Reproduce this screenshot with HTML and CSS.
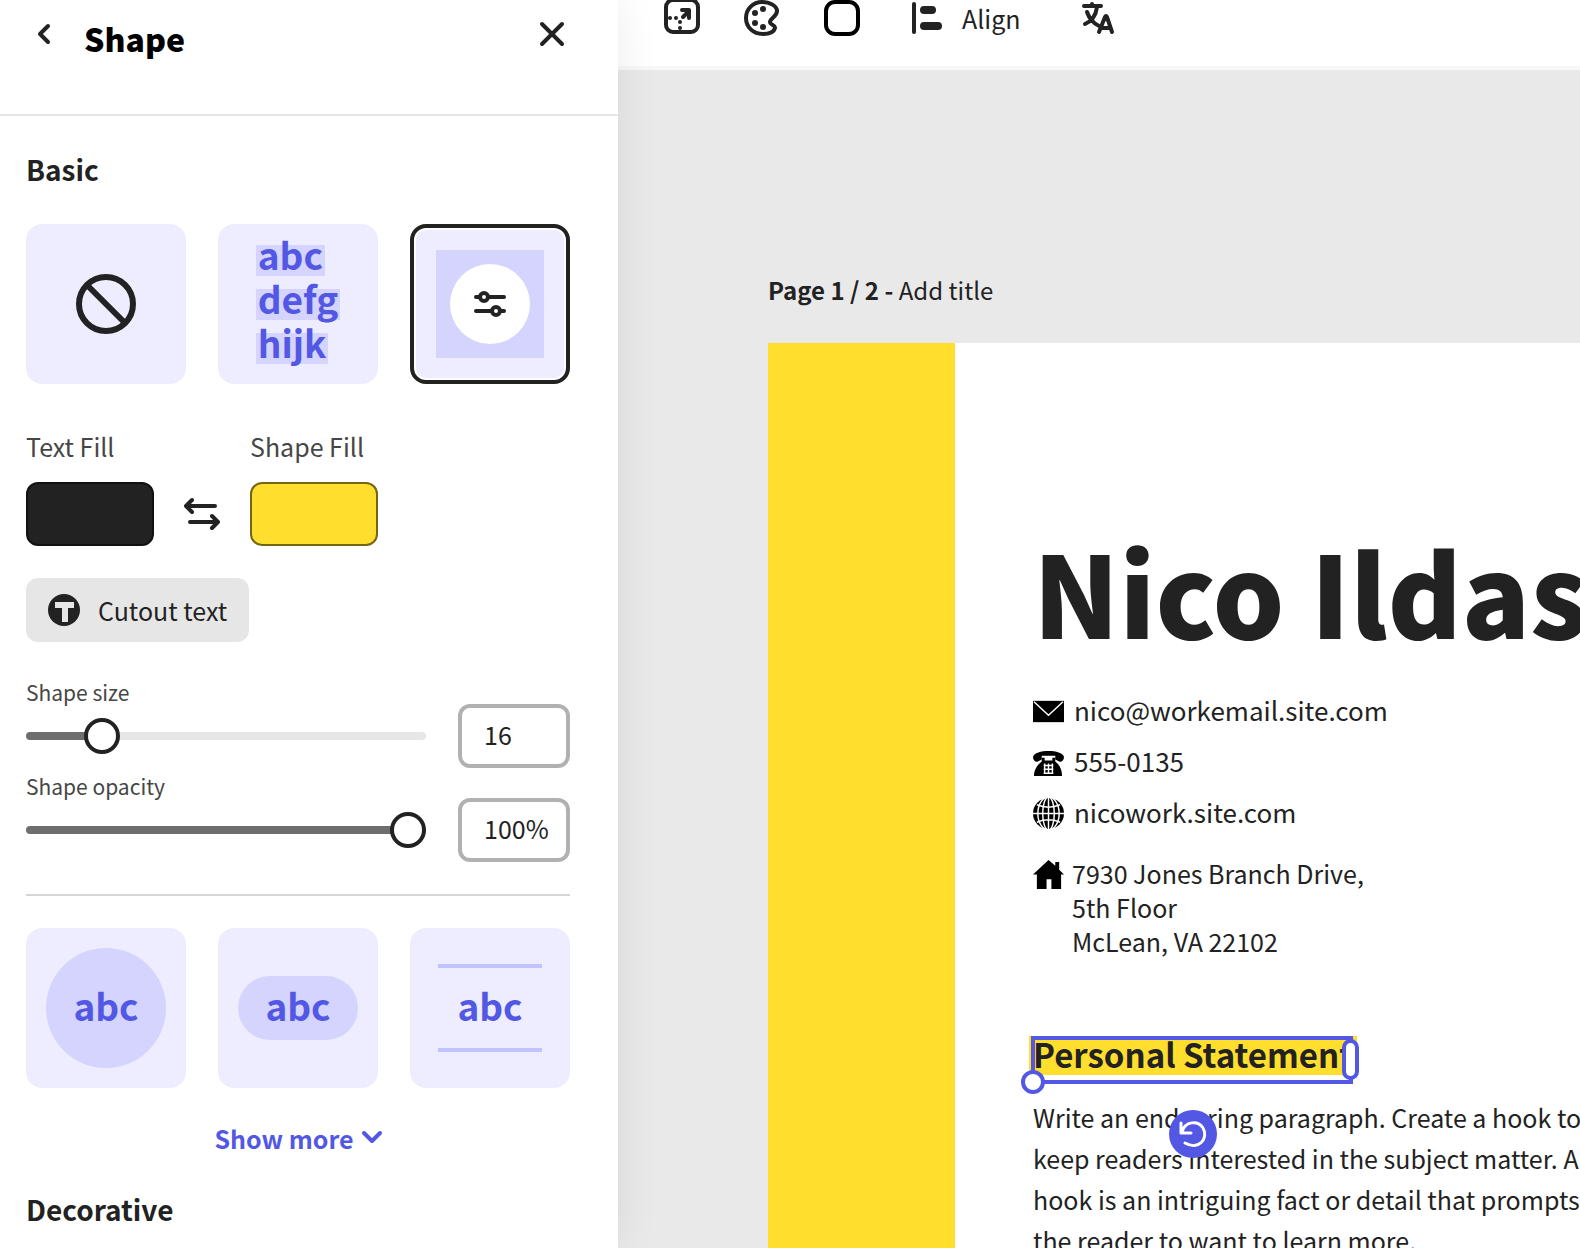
FILE: index.html
```html
<!DOCTYPE html>
<html lang="en">
<head>
  <meta charset="UTF-8">
  <meta name="viewport" content="width=device-width, initial-scale=1.0">
  <title>Shape</title>
  <link rel="stylesheet" href="styles.css">
</head>
<body>
  <!-- shape panel -->
  <aside class="panel">
    <header class="panel-header">
      <button class="icon-button" aria-label="Back">
        <svg viewBox="0 0 36 36"><path class="line" d="M22 10l-8 8 8 8"/></svg>
      </button>
      <h1 class="panel-title">Shape</h1>
      <button class="icon-button" aria-label="Close">
        <svg viewBox="0 0 36 36"><path class="line" d="M8 8l20 20M28 8L8 28"/></svg>
      </button>
    </header>

    <div class="panel-body">
      <h2 class="section-title">Basic</h2>
      <div class="tiles">
        <button class="tile" aria-label="None">
          <svg class="none-icon" viewBox="0 0 60 60">
            <circle cx="30" cy="30" r="27"/>
            <path d="M11 11l38 38"/>
          </svg>
        </button>
        <button class="tile">
          <span class="text-lines">
            <span>abc</span>
            <span>defg</span>
            <span>hijk</span>
          </span>
        </button>
        <button class="tile selected" aria-label="Rectangle">
          <span class="square">
            <span class="round">
              <svg viewBox="0 0 32 26">
                <path class="line" d="M2 6h4M14 6h16M2 20h16M26 20h4"/>
                <circle class="line" cx="10" cy="6" r="4"/>
                <circle class="line" cx="22" cy="20" r="4"/>
              </svg>
            </span>
          </span>
        </button>
      </div>

      <div class="fills">
        <label class="fill-label" for="text-fill">Text Fill</label>
        <label class="fill-label shape-label" for="shape-fill">Shape Fill</label>
        <button class="swatch dark" id="text-fill"></button>
        <button class="swap" aria-label="Swap colors">
          <svg viewBox="0 0 40 36">
            <path class="line" d="M33 10H4M10 4l-6 6 6 6M8 26h28M30 20l6 6-6 6"/>
          </svg>
        </button>
        <button class="swatch yellow" id="shape-fill"></button>
      </div>

      <button class="cutout">
        <svg viewBox="0 0 32 32">
          <circle cx="16" cy="16" r="16"/>
          <path d="M7 8h19v6h-6v14h-6V14H7z"/>
        </svg>
        Cutout text
      </button>

      <div class="sliders">
        <div class="slider-row">
          <div class="slider">
            <label for="size">Shape size</label>
            <input type="range" id="size" min="0" max="100" value="16" style="--value: 16%">
          </div>
          <input class="number" type="text" value="16" aria-label="Shape size value">
        </div>
        <div class="slider-row">
          <div class="slider">
            <label for="opacity">Shape opacity</label>
            <input type="range" id="opacity" min="0" max="100" value="100" style="--value: 100%">
          </div>
          <input class="number" type="text" value="100%" aria-label="Shape opacity value">
        </div>
      </div>

      <hr class="divider">

      <div class="tiles">
        <button class="tile"><span class="abc circle">abc</span></button>
        <button class="tile"><span class="abc pill">abc</span></button>
        <button class="tile"><span class="abc lines">abc</span></button>
      </div>

      <button class="show-more">
        Show more
        <svg viewBox="0 0 20 16"><path d="M2 3l8 8 8-8"/></svg>
      </button>

      <h2 class="section-title">Decorative</h2>
    </div>
  </aside>

  <main class="editor">
    <!-- toolbar -->
    <nav class="toolbar">
      <button class="tool" aria-label="Resize">
        <svg viewBox="0 0 36 36">
          <rect class="thick" x="2" y="0" width="32" height="32" rx="7"/>
          <path class="thick" d="M18 10h7v8M19 17l6-6"/>
          <circle class="solid" cx="6" cy="18" r="2"/>
          <circle class="solid" cx="12" cy="18" r="2"/>
          <circle class="solid" cx="16" cy="22" r="2"/>
          <circle class="solid" cx="16" cy="28" r="2"/>
        </svg>
      </button>
      <button class="tool" aria-label="Color">
        <svg viewBox="0 0 36 36">
          <path class="thick" d="M18 2C9 2 2 9 2 18s7 16 17 16c6 0 11-2 12-6 1-3-5-3-5-6 0-4 7-5 7-11 0-5-7-9-15-9z"/>
          <circle class="solid" cx="11" cy="13" r="3"/>
          <circle class="solid" cx="19" cy="9" r="3"/>
          <circle class="solid" cx="11" cy="23" r="3"/>
          <circle class="solid" cx="19" cy="27" r="3"/>
        </svg>
      </button>
      <button class="tool" aria-label="Shape">
        <svg viewBox="0 0 36 36"><rect class="thick black" x="2" y="2" width="32" height="32" rx="9"/></svg>
      </button>
      <button class="tool wide">
        <svg viewBox="0 0 36 36">
          <path class="thick" d="M2 4v28"/>
          <rect class="solid" x="8" y="6" width="16" height="8" rx="4"/>
          <rect class="solid" x="8" y="22" width="22" height="8" rx="4"/>
        </svg>
        Align
      </button>
      <button class="tool wide" aria-label="Translate">
        <svg viewBox="0 0 36 36">
          <path class="thick" d="M3 6h17M11 4v2M16 7c-1 8-5 14-12 17M6 12c2 6 7 12 12 14M18 32l6-15q1-2 2 0l5 15M21 28h8"/>
        </svg>
      </button>
    </nav>

    <!-- canvas with the resume page -->
    <div class="workspace">
      <p class="page-label"><strong>Page 1 / 2 - </strong>Add title</p>
      <article class="page">
        <div class="band"></div>
        <div class="resume">
          <h2 class="name">Nico Ildas</h2>
          <ul class="contact">
            <li>
              <svg viewBox="0 0 32 32">
                <path d="M0 5h32v22H0z"/>
                <path class="cut" d="M1 6l15 14L31 6"/>
              </svg>
              nico@workemail.site.com
            </li>
            <li>
              <svg viewBox="0 0 32 32">
                <path d="M0 10C2 2 30 2 32 10c0 4-3 6-5 5l-4-2V9H9v4l-4 2C3 16 0 14 0 10z"/>
                <path d="M9 11h3v3h8v-3h3v4c4 3 7 8 7 15H1c0-7 4-12 8-15z"/>
                <path class="cut" d="M11 19h10M11 23h10M11 27h10M12 17v10M16 17v10M20 17v10"/>
              </svg>
              555-0135
            </li>
            <li>
              <svg viewBox="0 0 32 32">
                <circle cx="16" cy="16" r="16"/>
                <path class="cut" d="M0 16h32M16 0v32M4 7q12 5 24 0M4 25q12-5 24 0"/>
                <ellipse class="cut" cx="16" cy="16" rx="6" ry="17"/>
                <ellipse class="cut" cx="16" cy="16" rx="11" ry="17"/>
              </svg>
              nicowork.site.com
            </li>
            <li class="address">
              <svg viewBox="0 0 32 32">
                <path d="M16 1l7 6V3h4v8l5 5h-3v15H19V21h-5v10H4V16H0z"/>
              </svg>
              <span>7930 Jones Branch Drive,<br>5th Floor<br>McLean, VA 22102</span>
            </li>
          </ul>

          <div class="selection">
            <h3 class="statement">Personal Statement</h3>
            <div class="frame"></div>
            <span class="corner-handle"></span>
            <span class="side-handle"></span>
            <button class="rotate" aria-label="Rotate">
              <svg viewBox="0 0 48 48"><path d="M12 13v10h10M13 22c3-11 16-12 21-4 6 10-4 23-18 15"/></svg>
            </button>
          </div>
          <p class="text">Write an endearing paragraph. Create a hook to<br>keep readers interested in the subject matter. A<br>hook is an intriguing fact or detail that prompts<br>the reader to want to learn more.</p>
        </div>
      </article>
    </div>
  </main>
</body>
</html>
```
FILE: styles.css
```css
* {
  box-sizing: border-box;
}

body {
  margin: 0;
  height: 100vh;
  display: flex;
  overflow: hidden;
  background: #fff;
  color: #222;
  font-family: "Noto Sans CJK SC", "Open Sans", sans-serif;
  font-size: 25px;
}

h1, h2, h3, p, ul {
  margin: 0;
  padding: 0;
}

button {
  padding: 0;
  border: none;
  background: none;
  color: inherit;
  font: inherit;
  cursor: pointer;
}

svg {
  display: block;
  flex: none;
  overflow: visible;
}

.line {
  fill: none;
  stroke: #222;
  stroke-width: 4;
  stroke-linecap: round;
  stroke-linejoin: round;
}

/* panel */
.panel {
  flex: none;
  position: relative;
  z-index: 1;
  background: #fff;
  box-shadow: 0 0 40px rgba(0, 0, 0, 0.08);
}

.panel-header {
  display: flex;
  align-items: flex-start;
  gap: 22px;
  height: 116px;
  padding: 16px 48px 0 26px;
  border-bottom: 2px solid #e6e6e6;
}

.icon-button svg {
  width: 36px;
  height: 36px;
}

.panel-title {
  flex: 1;
  color: #000;
  font-size: 32px;
  font-weight: 900;
  line-height: 44px;
}

.panel-body {
  padding: 33px 48px 0 26px;
}

.section-title {
  font-size: 28px;
  font-weight: 700;
  line-height: 40px;
}

.tiles {
  display: grid;
  grid-template-columns: repeat(3, 160px);
  gap: 32px;
}

.section-title + .tiles {
  margin-top: 35px;
}

.tile {
  display: flex;
  align-items: center;
  justify-content: center;
  height: 160px;
  border-radius: 16px;
  background: #ededff;
  color: #5258e4;
  font-size: 37px;
  font-weight: 700;
}

.tile.selected {
  border: 4px solid #222;
  box-shadow: inset 0 0 0 2px #fff;
}

.none-icon {
  width: 60px;
  fill: none;
  stroke: #222;
  stroke-width: 6;
}

.text-lines {
  display: flex;
  flex-direction: column;
  align-items: flex-start;
  gap: 13px;
}

.text-lines span {
  padding: 0 2px 13px;
  background: #d4d4ff;
  line-height: 18px;
}

.square {
  display: flex;
  align-items: center;
  justify-content: center;
  width: 108px;
  height: 108px;
  background: #d4d4ff;
}

.round {
  display: flex;
  align-items: center;
  justify-content: center;
  width: 80px;
  height: 80px;
  border-radius: 50%;
  background: #fff;
}

.round svg {
  width: 32px;
}

.abc {
  display: flex;
  align-items: center;
  justify-content: center;
  width: 120px;
  padding-bottom: 6px;
}

.circle {
  height: 120px;
  border-radius: 50%;
  background: #d4d4ff;
}

.pill {
  height: 64px;
  border-radius: 32px;
  background: #d4d4ff;
}

.lines {
  width: 104px;
  height: 88px;
  border-top: 4px solid #c1c3ff;
  border-bottom: 4px solid #c1c3ff;
}

.fills {
  display: grid;
  grid-template-columns: 128px 96px 128px;
  row-gap: 20px;
  margin-top: 46px;
}

.fill-label {
  color: #464646;
  line-height: 32px;
}

.shape-label {
  grid-column: 3;
}

.swatch {
  height: 64px;
  border: 2px solid #111;
  border-radius: 12px;
}

.dark {
  background: #222;
}

.yellow {
  border-color: #756513;
  background: #ffde2d;
}

.swap {
  display: flex;
  align-items: center;
  justify-content: center;
}

.swap svg {
  width: 40px;
  height: 36px;
}

.cutout {
  display: flex;
  align-items: center;
  gap: 18px;
  height: 64px;
  margin-top: 32px;
  padding: 0 22px;
  border-radius: 12px;
  background: #e6e6e6;
}

.cutout svg {
  width: 32px;
  fill: #222;
}

.cutout path {
  fill: #e6e6e6;
}

.sliders {
  display: grid;
  gap: 4px;
  margin-top: 36px;
}

.slider-row {
  display: flex;
  align-items: flex-end;
  gap: 32px;
}

.slider {
  flex: 1;
  display: grid;
  gap: 12px;
  padding-bottom: 14px;
  color: #464646;
  font-size: 21px;
  line-height: 28px;
}

.slider input {
  appearance: none;
  width: 100%;
  height: 36px;
  margin: 0;
  background: none;
}

.slider input::-webkit-slider-runnable-track {
  height: 8px;
  border-radius: 4px;
  background: linear-gradient(to right, #6e6e6e var(--value), #e6e6e6 var(--value));
}

.slider input::-webkit-slider-thumb {
  appearance: none;
  width: 36px;
  height: 36px;
  margin-top: -14px;
  border: 4px solid #222;
  border-radius: 50%;
  background: #fff;
}

.number {
  width: 112px;
  height: 64px;
  padding: 0 0 4px 22px;
  border: 4px solid #b1b1b1;
  border-radius: 12px;
  color: #222;
  font: inherit;
}

.divider {
  height: 2px;
  margin: 32px 0;
  border: none;
  background: #d5d5d5;
}

.show-more {
  display: flex;
  align-items: center;
  gap: 8px;
  margin: 34px auto 35px;
  color: #5258e4;
  font-weight: 700;
  line-height: 32px;
}

.show-more svg {
  width: 20px;
  fill: none;
  stroke: #5258e4;
  stroke-width: 4;
  stroke-linecap: round;
  stroke-linejoin: round;
}

/* editor */
.editor {
  flex: 1;
  display: flex;
  flex-direction: column;
  min-width: 0;
}

.toolbar {
  flex: none;
  display: flex;
  align-items: flex-start;
  gap: 44px;
  height: 70px;
  padding-left: 46px;
  border-bottom: 4px solid #f8f8f8;
}

.tool {
  display: flex;
  align-items: center;
  gap: 14px;
  line-height: 36px;
}

.wide {
  padding: 0 8px;
}

.tool svg {
  width: 36px;
  height: 36px;
}

.thick {
  fill: none;
  stroke: #222;
  stroke-width: 4;
  stroke-linecap: round;
  stroke-linejoin: round;
}

.black {
  stroke: #000;
}

.solid {
  fill: #222;
}

.workspace {
  flex: 1;
  min-height: 0;
  padding: 204px 0 0 150px;
  overflow: hidden;
  background: #e9e9e9;
}

.page-label {
  font-size: 24px;
  line-height: 32px;
}

.page {
  display: flex;
  margin-top: 37px;
  background: #fff;
  white-space: nowrap;
}

.band {
  flex: none;
  width: 187px;
  background: #ffde2d;
}

.resume {
  padding: 187px 0 78px 78px;
}

.name {
  font-size: 113px;
  font-weight: 900;
  line-height: 120px;
}

.contact {
  display: grid;
  gap: 15px;
  margin-top: 42px;
  list-style: none;
}

.contact li {
  display: flex;
  align-items: center;
  gap: 10px;
  font-size: 26px;
  line-height: 36px;
}

.contact svg {
  width: 31px;
  height: 31px;
  margin-top: 3px;
  fill: #000;
}

.contact .cut {
  fill: none;
  stroke: #fff;
  stroke-width: 1.5;
}

.contact .address {
  align-items: flex-start;
  gap: 8px;
  margin-top: 11px;
  font-size: 25px;
  line-height: 34px;
}

.selection {
  position: relative;
  isolation: isolate;
  width: fit-content;
  height: 48px;
  margin-top: 78px;
}

.statement {
  font-size: 33px;
  font-weight: 700;
  line-height: 36px;
}

/* yellow shape behind the heading */
.statement::before {
  content: "";
  position: absolute;
  inset: 0 -4px 9px -4px;
  z-index: -1;
  background: #ffde2d;
}

.frame {
  position: absolute;
  inset: 0 0 0 -2px;
  border: 4px solid #5258e4;
}

.corner-handle {
  position: absolute;
  left: -12px;
  bottom: -10px;
  width: 24px;
  height: 24px;
  border: 4px solid #5258e4;
  border-radius: 50%;
  background: #fff;
}

.side-handle {
  position: absolute;
  right: -6px;
  top: 3px;
  width: 17px;
  height: 41px;
  border: 4px solid #5258e4;
  border-radius: 9px;
  background: #fff;
}

.rotate {
  position: absolute;
  left: 50%;
  top: 74px;
  width: 48px;
  height: 48px;
  margin-left: -24px;
  border-radius: 50%;
  background: #5258e4;
}

.rotate svg {
  fill: none;
  stroke: #fff;
  stroke-width: 3;
  stroke-linecap: round;
  stroke-linejoin: round;
}

.text {
  margin-top: 13px;
  line-height: 41px;
}
```
